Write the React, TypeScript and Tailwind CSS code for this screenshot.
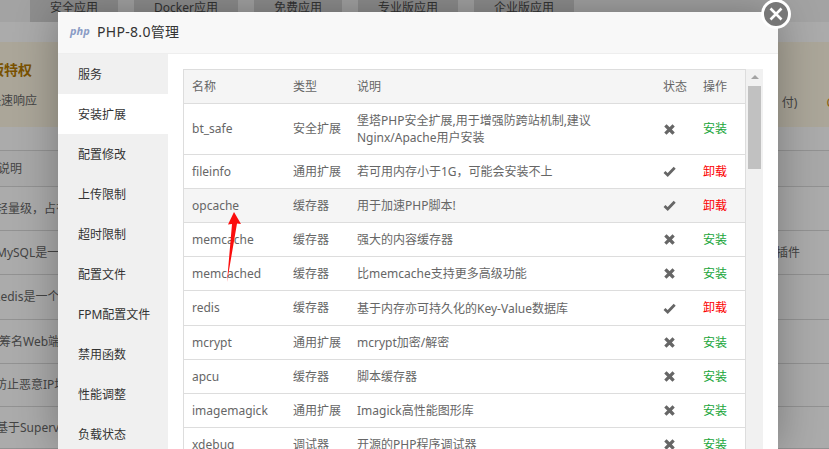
const font = "font-['Noto_Sans','Noto_Sans_CJK_SC',sans-serif]";

const tabs = ["安全应用", "Docker应用", "免费应用", "专业版应用", "企业版应用"];

const menu = ["服务", "安装扩展", "配置修改", "上传限制", "超时限制", "配置文件", "FPM配置文件", "禁用函数", "性能调整", "负载状态"];

const bgRows = [
  { left: "轻量级，占有", right: "", h: "h-[44px]", off: "-ml-[4px]" },
  { left: "MySQL是一个", right: "插件", h: "h-[44px]", off: "-ml-[4px]" },
  { left: "Redis是一个", right: "", h: "h-[45px]", off: "-ml-[7px]" },
  { left: "筹名Web端口", right: "", h: "h-[44px]", off: "-ml-[1px]" },
  { left: "防止恶意IP地址", right: "", h: "h-[43px]", off: "-ml-[5px]" },
  { left: "基于Supervisor", right: "", h: "h-[42px]", off: "-ml-[4px]" },
];

const rows = [
  { name: "bt_safe", type: "安全扩展", desc: "堡塔PHP安全扩展,用于增强防跨站机制,建议Nginx/Apache用户安装", on: false, h: "h-[51px]" },
  { name: "fileinfo", type: "通用扩展", desc: "若可用内存小于1G，可能会安装不上", on: true },
  { name: "opcache", type: "缓存器", desc: "用于加速PHP脚本!", on: true, hover: true },
  { name: "memcache", type: "缓存器", desc: "强大的内容缓存器", on: false },
  { name: "memcached", type: "缓存器", desc: "比memcache支持更多高级功能", on: false },
  { name: "redis", type: "缓存器", desc: "基于内存亦可持久化的Key-Value数据库", on: true, h: "h-[35px]" },
  { name: "mcrypt", type: "通用扩展", desc: "mcrypt加密/解密", on: false },
  { name: "apcu", type: "缓存器", desc: "脚本缓存器", on: false },
  { name: "imagemagick", type: "通用扩展", desc: "Imagick高性能图形库", on: false },
  { name: "xdebug", type: "调试器", desc: "开源的PHP程序调试器", on: false },
];

function IconRemove() {
  return (
    <svg width="11" height="11" viewBox="0 0 11 11" className="ml-[1px] text-[#666]">
      <path d="M2.5 2.5 L8.5 8.5 M8.5 2.5 L2.5 8.5" stroke="currentColor" strokeWidth="3.2" strokeLinecap="square" />
    </svg>
  );
}

function IconOk() {
  return (
    <svg width="13" height="11" viewBox="0 0 13 11" className="text-[#666]">
      <path d="M1.5 6 L4.7 9 L11.7 1.8" stroke="currentColor" strokeWidth="2.8" fill="none" />
    </svg>
  );
}

export default function App() {
  return (
    <div className={`relative h-[449px] w-[829px] overflow-hidden bg-[#ababab] text-[12px] text-[#444] ${font}`}>
      {/* page behind the dialog */}
      <div className="flex h-[22px] gap-[16px] bg-[#a3a3a3] pl-[30px]">
        {tabs.map((t) => (
          <div key={t} className="flex h-[22px] items-start bg-[#8e8e8e] px-[20px] pt-[1px] leading-[14px] whitespace-nowrap text-[#333]">
            {t}
          </div>
        ))}
      </div>
      <div className="mt-[20px] flex h-[85px] justify-between bg-[#aba699]">
        <div className="-ml-[10px] pt-[17px]">
          <div className="text-[14px] font-bold text-[#7a5200]">版特权</div>
          <div className="mt-[12px] -ml-[1px] text-[#444]">快速响应</div>
        </div>
        <div className="-mr-[5px] flex pt-[52px] text-[#444]">
          <span>付)</span>
          <span className="ml-[29px] text-[#8a5f10]">C</span>
        </div>
      </div>
      <div className="mt-[23px] flex h-[37px] items-center border-y border-[#929292] bg-[#a8a8a8] text-[#444]">
        <span className="-ml-[2px]">说明</span>
      </div>
      <div>
        {bgRows.map((r) => (
          <div key={r.left} className={`${r.h} flex items-center justify-between border-b border-[#929292] text-[#444]`}>
            <span className={`${r.off} whitespace-nowrap`}>{r.left}</span>
            <span className="pr-[29px]">{r.right}</span>
          </div>
        ))}
      </div>

      {/* dialog */}
      <div className="absolute top-[12px] left-[58px] h-[437px] w-[720px] bg-white shadow-[0_0_40px_rgba(0,0,0,0.3)]">
        <div className="flex h-[42px] items-center border-b border-[#eee] bg-[#f8f8f8] pb-[2px] pl-[12px] text-[14px] text-[#333]">
          <span className="w-[27px] text-[11px] font-bold italic text-[#8a9cc5]">php</span>
          <span className="tracking-[0.3px]">PHP-8.0管理</span>
        </div>
        <div className="flex">
          <div className="w-[110px] shrink-0 bg-[#f0f0f0]">
            {menu.map((m, i) => (
              <div key={m} className={`flex h-[40px] items-center pt-[1px] pl-[20px] text-[#333] ${i === 1 ? "bg-white" : ""}`}>
                {m}
              </div>
            ))}
          </div>
          <div className="flex pt-[15px] pl-[15px]">
            <div className="w-[563px] border-x border-t border-[#ddd]">
              <div className="flex h-[34px] items-center border-b border-[#ddd] bg-[#f5f5f5] pt-[1px] text-[#666]">
                <div className="w-[101px] pl-[8px]">名称</div>
                <div className="w-[64px] pl-[8px]">类型</div>
                <div className="w-[306px] pl-[8px]">说明</div>
                <div className="w-[40px] pl-[8px]">状态</div>
                <div className="pl-[8px]">操作</div>
              </div>
              {rows.map((r) => (
                <div key={r.name} className={`flex items-center border-b border-[#ddd] text-[#666] ${r.h ?? "h-[34px]"} ${r.hover ? "bg-[#f5f5f5]" : ""}`}>
                  <div className="w-[101px] pl-[8px]">{r.name}</div>
                  <div className="w-[64px] pl-[8px]">{r.type}</div>
                  <div className="w-[306px] pr-[60px] pl-[8px] leading-[17px]">{r.desc}</div>
                  <div className="flex w-[40px] pl-[8px]">{r.on ? <IconOk /> : <IconRemove />}</div>
                  <div className={`pl-[8px] ${r.on ? "text-[#fc0000]" : "text-[#20a53a]"}`}>{r.on ? "卸载" : "安装"}</div>
                </div>
              ))}
            </div>
            <div className="h-[380px] w-[17px] bg-[#f1f1f1]">
              <div className="mx-auto mt-[6px] h-0 w-0 border-x-[4px] border-b-[4px] border-x-transparent border-b-[#a3a3a3]" />
              <div className="mx-auto mt-[7px] h-[83px] w-[13px] bg-[#c1c1c1]" />
            </div>
          </div>
        </div>

        {/* red arrow drawn on the screenshot */}
        <svg className="absolute top-[200px] left-[166px]" width="20" height="74" viewBox="0 0 20 74">
          <path d="M3 70 L8 12 L4 12.5 L10 0 L17 12 L13 11.5 Z" fill="#fb0d0d" />
        </svg>
      </div>

      {/* close button */}
      <div className="absolute -top-[1px] left-[761px] flex h-[30px] w-[30px] items-center justify-center rounded-full border-[3px] border-white bg-[#777]">
        <svg width="14" height="14" viewBox="0 0 14 14" className="text-white">
          <path d="M1.5 1.5 L12.5 12.5 M12.5 1.5 L1.5 12.5" stroke="currentColor" strokeWidth="2.6" />
        </svg>
      </div>
    </div>
  );
}
